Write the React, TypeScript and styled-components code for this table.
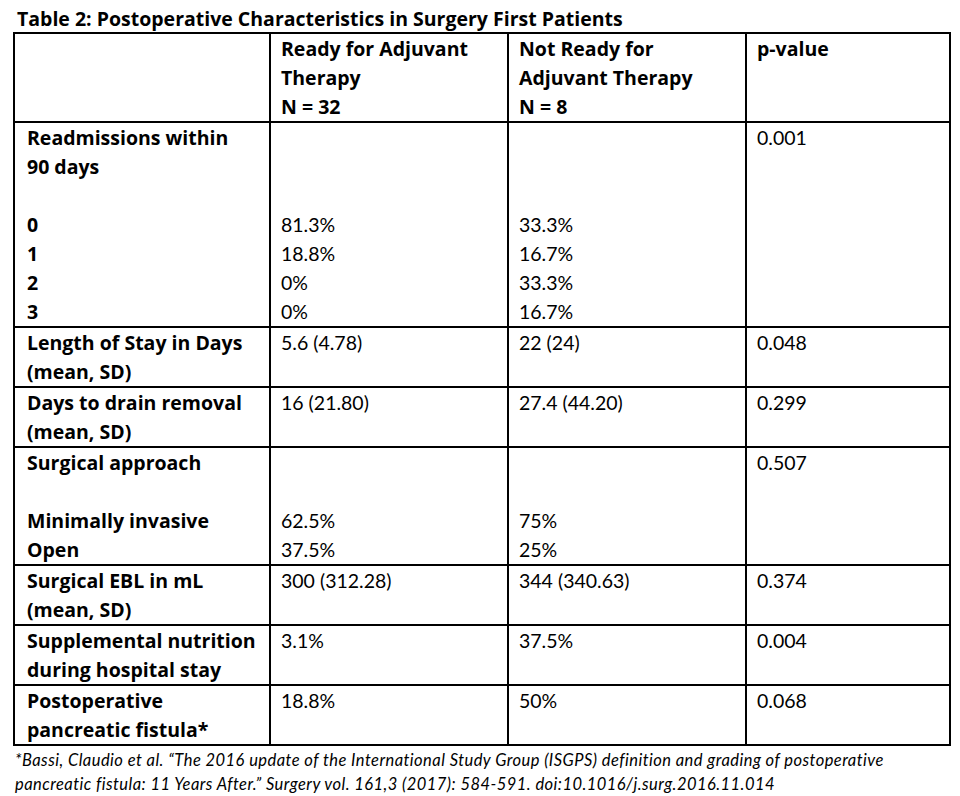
import React from "react";
import styled, { createGlobalStyle } from "styled-components";

const Global = createGlobalStyle`
  html, body { margin: 0; padding: 0; background: #fff; }
  body { font-family: Lato, "Open Sans", sans-serif; color: #000; }
`;

const Page = styled.div`
  width: 960px;
  height: 796px;
  padding: 5px 11px 0 13px;
  box-sizing: border-box;
  display: flex;
  flex-direction: column;
`;

const Title = styled.h1`
  margin: 0 0 0 4px;
  font-family: "Open Sans", Lato, sans-serif;
  font-size: 19.5px;
  line-height: 27px;
  font-weight: 700;
  color: #000;
`;

const Table = styled.table`
  border-collapse: collapse;
  table-layout: fixed;
  width: 936px;
  font-size: 19.5px;
  line-height: 29px;
`;

const Cell = styled.td<{ $bold?: boolean; $pl?: number }>`
  border: 2px solid #000;
  padding: 0 4px 0 ${(p) => p.$pl ?? 10}px;
  vertical-align: top;
  font-family: ${(p) => (p.$bold ? `"Open Sans", Lato, sans-serif` : `Lato, "Open Sans", sans-serif`)};
  font-size: 19.5px;
  font-weight: ${(p) => (p.$bold ? 700 : 400)};
  color: #000;
`;

const Line = styled.div`
  height: 29px;
  white-space: nowrap;
`;

const Footnote = styled.p`
  margin: 2px 0 0 2px;
  font-size: 16.5px;
  line-height: 24px;
  font-style: italic;
  letter-spacing: 0.45px;
  color: #000;
`;

type Row = { label: string[]; a: string[]; b: string[]; p: string[] };

const rows: Row[] = [
  {
    label: ["Readmissions within", "90 days", "", "0", "1", "2", "3"],
    a: ["", "", "", "81.3%", "18.8%", "0%", "0%"],
    b: ["", "", "", "33.3%", "16.7%", "33.3%", "16.7%"],
    p: ["0.001"],
  },
  { label: ["Length of Stay in Days", "(mean, SD)"], a: ["5.6 (4.78)"], b: ["22 (24)"], p: ["0.048"] },
  { label: ["Days to drain removal", "(mean, SD)"], a: ["16 (21.80)"], b: ["27.4 (44.20)"], p: ["0.299"] },
  {
    label: ["Surgical approach", "", "Minimally invasive", "Open"],
    a: ["", "", "62.5%", "37.5%"],
    b: ["", "", "75%", "25%"],
    p: ["0.507"],
  },
  { label: ["Surgical EBL in mL", "(mean, SD)"], a: ["300 (312.28)"], b: ["344 (340.63)"], p: ["0.374"] },
  {
    label: ["Supplemental nutrition", "during hospital stay"],
    a: ["3.1%"],
    b: ["37.5%"],
    p: ["0.004"],
  },
  {
    label: ["Postoperative", "pancreatic fistula*"],
    a: ["18.8%"],
    b: ["50%"],
    p: ["0.068"],
  },
];

const Lines = ({ items }: { items: string[] }) => (
  <>
    {items.map((t, i) => (
      <Line key={i}>{t}</Line>
    ))}
  </>
);

export default function App() {
  return (
    <>
      <Global />
      <Page>
        <Title>Table 2: Postoperative Characteristics in Surgery First Patients</Title>
        <Table>
          <colgroup>
            <col style={{ width: 256 }} />
            <col style={{ width: 238 }} />
            <col style={{ width: 238 }} />
            <col style={{ width: 204 }} />
          </colgroup>
          <thead>
            <tr>
              <Cell $pl={12} />
              <Cell $bold>
                <Lines items={["Ready for Adjuvant", "Therapy", "N = 32"]} />
              </Cell>
              <Cell $bold>
                <Lines items={["Not Ready for", "Adjuvant Therapy", "N = 8"]} />
              </Cell>
              <Cell $bold>
                <Lines items={["p-value"]} />
              </Cell>
            </tr>
          </thead>
          <tbody>
            {rows.map((r, i) => (
              <tr key={i}>
                <Cell $bold $pl={12}>
                  <Lines items={r.label} />
                </Cell>
                <Cell>
                  <Lines items={r.a} />
                </Cell>
                <Cell>
                  <Lines items={r.b} />
                </Cell>
                <Cell>
                  <Lines items={r.p} />
                </Cell>
              </tr>
            ))}
          </tbody>
        </Table>
        <Footnote>
          *Bassi, Claudio et al. “The 2016 update of the International Study Group (ISGPS) definition and grading of postoperative
          <br />
          pancreatic fistula: 11 Years After.” Surgery vol. 161,3 (2017): 584-591. doi:10.1016/j.surg.2016.11.014
        </Footnote>
      </Page>
    </>
  );
}
